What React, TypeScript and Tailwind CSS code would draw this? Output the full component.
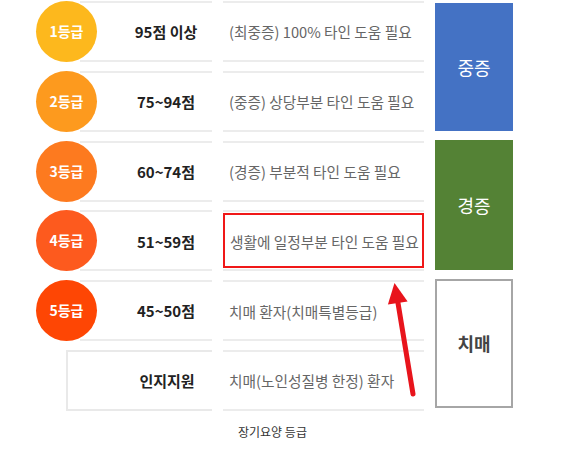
import React from "react";

const font = { fontFamily: '"Noto Sans CJK KR", "Noto Sans", sans-serif' };

type Row = { grade: string; color: string; score: string; desc: string; hl?: boolean };

const rows: Row[] = [
  { grade: "1등급", color: "bg-[#fdb81d]", score: "95점 이상", desc: "(최중증) 100% 타인 도움 필요" },
  { grade: "2등급", color: "bg-[#fd9a1e]", score: "75~94점", desc: "(중증) 상당부분 타인 도움 필요" },
  { grade: "3등급", color: "bg-[#fd7a1f]", score: "60~74점", desc: "(경증) 부분적 타인 도움 필요" },
  { grade: "4등급", color: "bg-[#fd5a1e]", score: "51~59점", desc: "생활에 일정부분 타인 도움 필요", hl: true },
  { grade: "5등급", color: "bg-[#fe4604]", score: "45~50점", desc: "치매 환자(치매특별등급)" },
];

export default function App() {
  return (
    <div className="relative w-[570px] h-[463px] bg-white overflow-hidden" style={font}>
      <div className="flex pt-[1px]">
        <div className="flex flex-col gap-[8.8px] pl-[36px]">
          {rows.map((r) => (
            <div key={r.grade} className="flex items-center h-[61px]">
              <div
                className={`relative z-10 w-[61px] h-[61px] shrink-0 rounded-full ${r.color} flex items-center justify-center text-white text-[14px] font-bold`}
              >
                {r.grade}
              </div>
              <div className="-ml-[17px] w-[132px] h-full border-y-2 border-[#ececec] flex items-center pl-[40px] pt-[2px]">
                <div className="flex-1 text-center text-[15px] font-bold text-[#222]">{r.score}</div>
              </div>
              <div className="ml-[11px] w-[201px] h-full border-y-2 border-[#ececec] flex items-center">
                {r.hl ? (
                  <div className="w-full h-[55px] border-2 border-[#f01818] flex items-center pl-[5px] pt-[2px] text-[14.7px] text-[#666] whitespace-nowrap">
                    {r.desc}
                  </div>
                ) : (
                  <div className="pl-[6px] pt-[2px] text-[14.7px] text-[#666] whitespace-nowrap">{r.desc}</div>
                )}
              </div>
            </div>
          ))}
          <div className="flex items-center h-[61px]">
            <div className="w-[30px] shrink-0" />
            <div className="w-[146px] h-full border-y-2 border-l-2 border-[#e9e9e9] flex items-center pl-[54px] pt-[2px]">
              <div className="flex-1 text-center text-[15px] font-bold text-[#222]">인지지원</div>
            </div>
            <div className="ml-[11px] w-[201px] h-full border-y-2 border-[#ececec] flex items-center">
              <div className="pl-[6px] pt-[2px] text-[14.7px] text-[#666] whitespace-nowrap">치매(노인성질병 한정) 환자</div>
            </div>
          </div>
        </div>
        <div className="ml-[11px] flex flex-col pt-[2px] gap-[9px]">
          <div className="w-[78px] h-[128px] bg-[#4472c4] flex items-center justify-center text-white text-[18px]">
            중증
          </div>
          <div className="w-[78px] h-[130px] bg-[#548235] flex items-center justify-center text-white text-[18px]">
            경증
          </div>
          <div className="w-[78px] h-[129px] border-2 border-[#a6a6a6] flex items-center justify-center text-[#444] text-[18px] font-bold">
            치매
          </div>
        </div>
      </div>
      <div className="mt-[13px] pl-[238px] text-[12px] text-[#333] leading-[16px]">장기요양 등급</div>
      <svg className="absolute left-0 top-0 pointer-events-none" width="570" height="463">
        <line x1="413" y1="394" x2="397.5" y2="300" stroke="#e8141c" strokeWidth="5" strokeLinecap="round" />
        <polygon points="394.5,283 407.6,301.5 387.9,304.5" fill="#e8141c" />
      </svg>
    </div>
  );
}
